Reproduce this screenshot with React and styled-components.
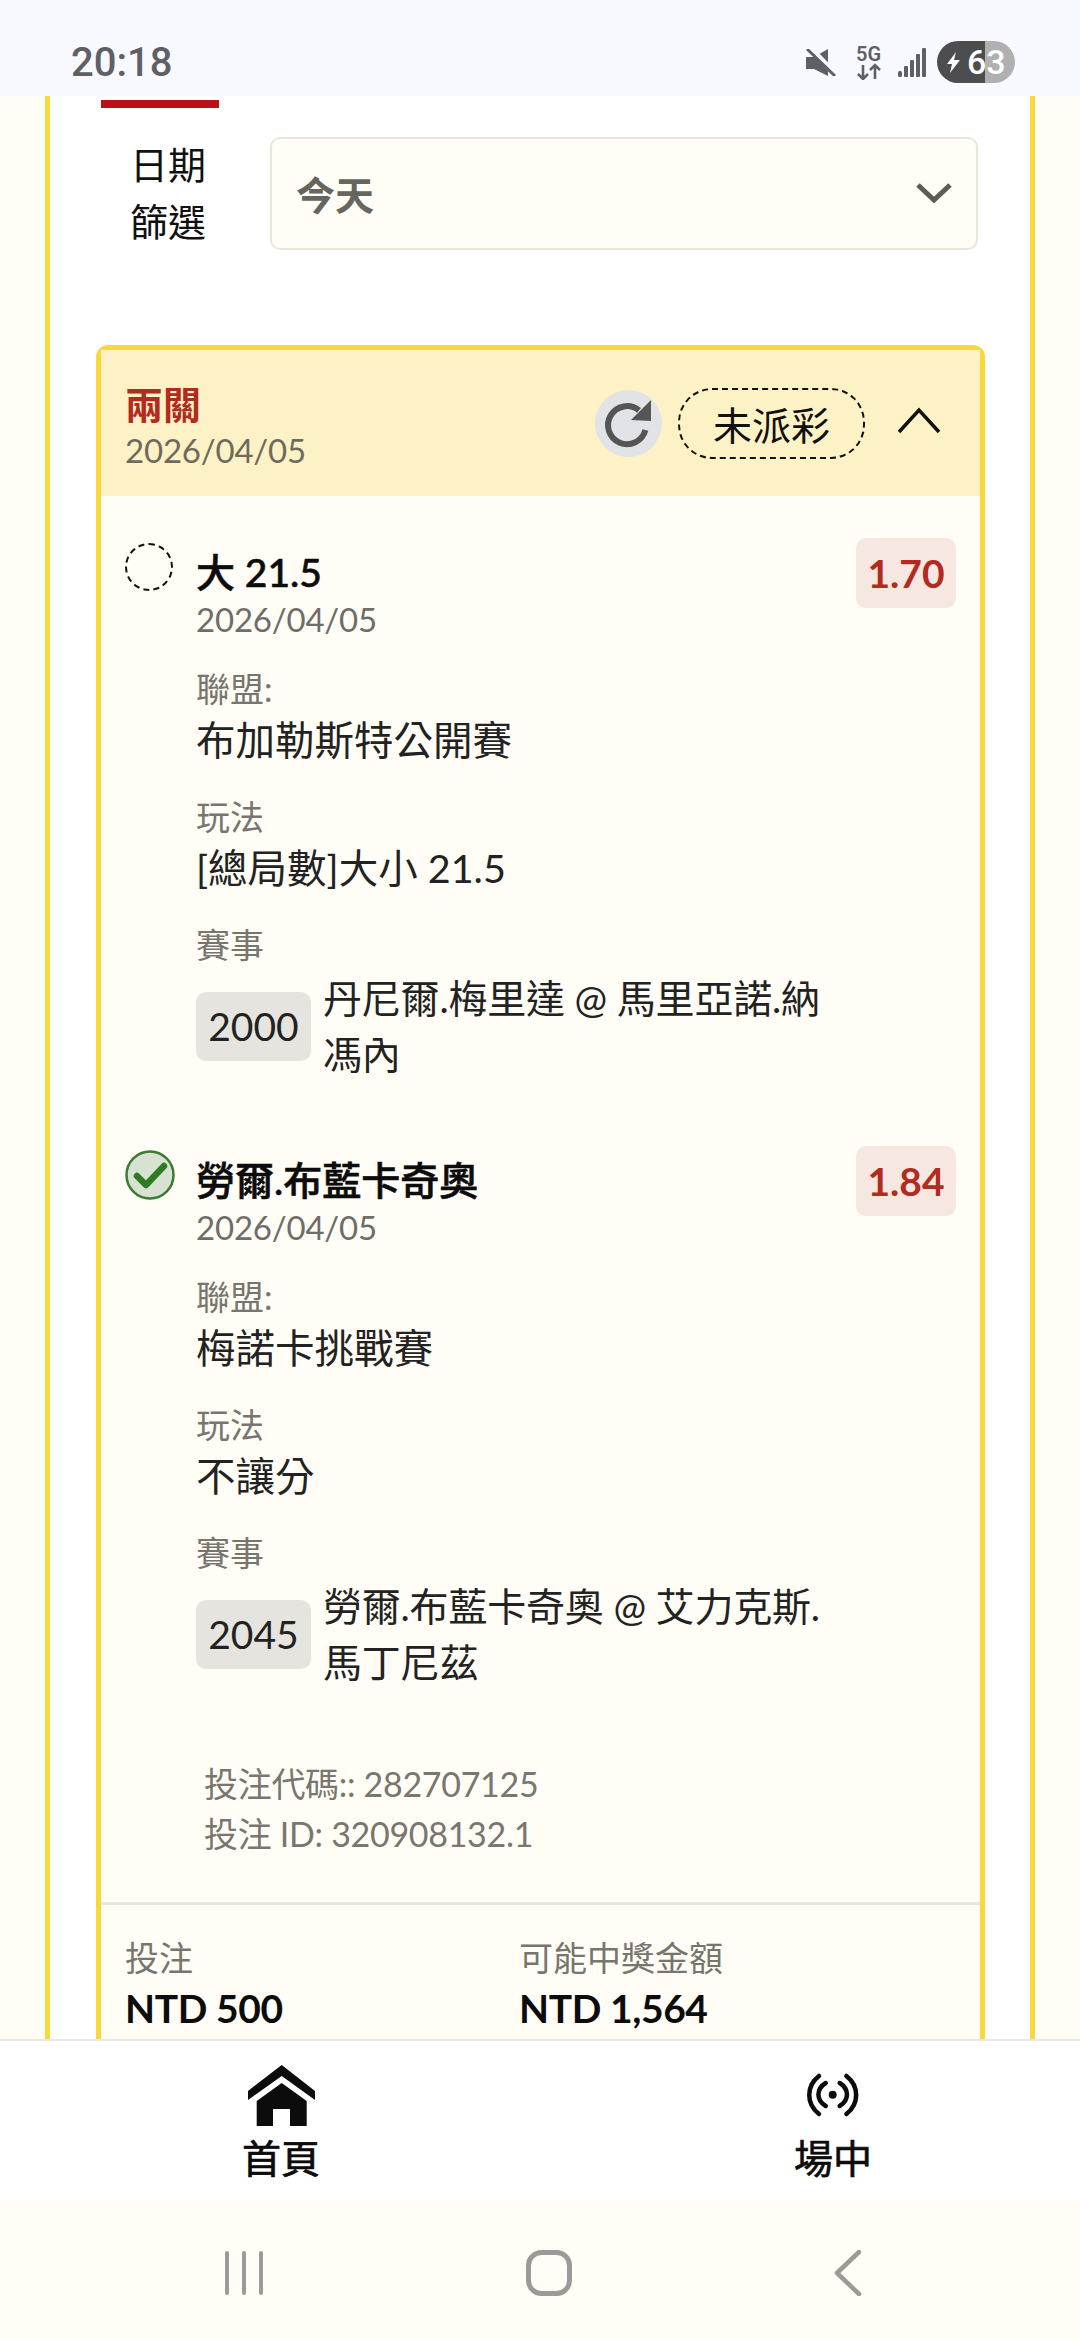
import React from 'react';
import styled, { createGlobalStyle } from 'styled-components';

const GlobalStyle = createGlobalStyle`
  html, body {
    margin: 0;
    padding: 0;
    background: #fffdf6;
    font-family: 'Lato', 'Noto Sans CJK TC', sans-serif;
  }
  * { box-sizing: border-box; }
`;

const Screen = styled.div`
  width: 1080px;
  height: 2340px;
  display: flex;
  flex-direction: column;
  overflow: hidden;
`;

const StatusBar = styled.div`
  height: 96px;
  flex: none;
  background: #f8f8ff;
  display: flex;
  align-items: center;
  justify-content: space-between;
  padding: 28px 65px 0 71px;
`;

const Clock = styled.div`
  font-family: 'Roboto', sans-serif;
  font-size: 40px;
  font-weight: 500;
  color: #5f6065;
`;

const StatusIcons = styled.div`
  display: flex;
  align-items: center;
  gap: 11px;
`;

const Battery = styled.div`
  width: 78px;
  height: 42px;
  border-radius: 21px;
  overflow: hidden;
  background: linear-gradient(to right, #4d4d50 0 48px, #b0b0b3 48px);
  color: #fff;
  font-family: 'Roboto', sans-serif;
  font-size: 34px;
  font-weight: 500;
  display: flex;
  align-items: center;
  padding-left: 10px;
`;

const Main = styled.div`
  flex: 1;
  min-height: 0;
  overflow: hidden;
  padding: 0 45px;
`;

const Sheet = styled.div`
  background: #fff;
  border-left: 5px solid #fbd83a;
  border-right: 5px solid #fbd83a;
  height: 100%;
  padding: 4px 45px 0 46px;
`;

const TabMark = styled.div`
  width: 118px;
  height: 8px;
  margin-left: 5px;
  background: #b91116;
`;

const FilterRow = styled.div`
  display: flex;
  align-items: center;
  margin-top: 28px;
  padding-right: 7px;
`;

const FilterLabel = styled.div`
  width: 174px;
  flex: none;
  padding-right: 30px;
  font-size: 38px;
  line-height: 57px;
  color: #111;
  text-align: center;
`;

const Select = styled.div`
  flex: 1;
  height: 113px;
  background: #fffdf6;
  border: 2px solid #e8e5dd;
  border-radius: 10px;
  display: flex;
  align-items: center;
  justify-content: space-between;
  padding: 0 24px;
  font-size: 39px;
  font-weight: 700;
  color: #66655f;
`;

const Card = styled.div`
  margin-top: 95px;
  background: #fffdf6;
  border: 5px solid #fbd83a;
  border-bottom: none;
  border-radius: 12px 12px 0 0;
`;

const CardHeader = styled.div`
  height: 146px;
  background: #fdf2c6;
  display: flex;
  align-items: center;
  padding: 0 39px 0 24px;
`;

const HeaderText = styled.div`
  flex: 1;
  padding-top: 6px;
`;

const BetTitle = styled.div`
  font-size: 38px;
  line-height: 48px;
  font-weight: 700;
  color: #b32a1e;
`;

const DateText = styled.div`
  font-size: 33px;
  line-height: 44px;
  letter-spacing: -0.2px;
  color: ${(p) => p.$tone || '#6f6a5c'};
`;

const RefreshButton = styled.div`
  width: 67px;
  height: 67px;
  border-radius: 50%;
  background: #e2e3e7;
  margin-right: 16px;
`;

const StatusPill = styled.div`
  width: 187px;
  height: 71px;
  border: 2px dashed #111;
  border-radius: 34px;
  display: flex;
  align-items: center;
  justify-content: center;
  font-size: 39px;
  color: #111;
  margin-right: 32px;
`;

const Legs = styled.div`
  padding: 42px 24px 0 24px;
`;

const Leg = styled.div`
  display: grid;
  grid-template-columns: 48px 1fr 100px;
  column-gap: 23px;
  margin-bottom: 64px;
`;

const RadioEmpty = styled.div`
  width: 48px;
  height: 48px;
  margin-top: 5px;
  border-radius: 50%;
  border: 2px dashed #111;
`;

const LegBody = styled.div`
  min-width: 0;
`;

const LegName = styled.div`
  font-size: 39px;
  line-height: 50px;
  font-weight: 500;
  -webkit-text-stroke: 0.6px #0c0c0c;
  color: #0c0c0c;
  margin-top: 9px;
`;

const FieldLabel = styled.div`
  font-size: 34px;
  line-height: 48px;
  color: #77756e;
  margin-top: ${(p) => (p.$first ? 24 : 26)}px;
`;

const FieldValue = styled.div`
  font-size: 39.5px;
  line-height: 54px;
  color: #222;
`;

const MatchRow = styled.div`
  display: flex;
  align-items: center;
  gap: 12px;
  margin-top: 1px;
`;

const MatchCode = styled.div`
  flex: none;
  width: 115px;
  height: 69px;
  border-radius: 10px;
  background: #e6e4de;
  display: flex;
  align-items: center;
  justify-content: center;
  font-size: 39px;
  color: #222;
`;

const MatchName = styled.div`
  font-size: 39px;
  line-height: 56px;
  letter-spacing: -0.2px;
  color: #222;
  width: 505px;
`;

const Odds = styled.div`
  width: 100px;
  height: 70px;
  border-radius: 10px;
  background: #f7e7e1;
  display: flex;
  align-items: center;
  justify-content: center;
  font-size: 39px;
  font-weight: 700;
  color: #b32a1e;
`;

const Codes = styled.div`
  padding: 5px 0 0 103px;
  font-size: 34px;
  line-height: 50px;
  letter-spacing: -0.3px;
  color: #78766f;
`;

const Totals = styled.div`
  display: grid;
  grid-template-columns: 394px 1fr;
  border-top: 3px solid #e7e5df;
  margin-top: 43px;
  padding: 28px 24px 60px;
`;

const TotalLabel = styled.div`
  font-size: 34px;
  line-height: 50px;
  color: #77756e;
`;

const TotalValue = styled.div`
  font-size: 39px;
  line-height: 50px;
  font-weight: 700;
  letter-spacing: -0.4px;
  color: #0c0c0c;
`;

const BottomNav = styled.div`
  height: 161px;
  flex: none;
  background: #fff;
  border-top: 2px solid #e8e8e8;
  display: grid;
  grid-template-columns: 562px 1fr;
`;

const NavItem = styled.div`
  display: flex;
  flex-direction: column;
  align-items: center;
  padding: 16px 0 0 ${(p) => p.$inset || 0}px;
  font-size: 39px;
  font-weight: 400;
  -webkit-text-stroke: 0.7px #0c0c0c;
  line-height: 50px;
  color: #0c0c0c;
`;

const NavIconBox = styled.div`
  height: 76px;
  display: flex;
  align-items: center;
`;

const SystemNav = styled.div`
  height: 140px;
  flex: none;
  background: #fffdf6;
  display: flex;
  align-items: center;
  padding: 6px 218px 0 224px;
  justify-content: space-between;
`;

const RefreshIcon = () => (
  <svg width="67" height="67" viewBox="0 0 67 67" fill="none">
    <path d="M44 20.4A19 19 0 1 0 50.4 40" stroke="#555" strokeWidth="6" />
    <path d="M56 10v21L36 30z" fill="#555" />
  </svg>
);

const CheckIcon = () => (
  <svg width="50" height="50" viewBox="0 0 50 50" style={{ marginTop: 4 }}>
    <circle cx="25" cy="25" r="23.5" fill="#d7e2d2" stroke="#3d7a32" strokeWidth="2.5" />
    <path d="M12 26l9 9 18-19" fill="none" stroke="#2f7a22" strokeWidth="6.5" strokeLinecap="round" strokeLinejoin="round" />
  </svg>
);

const SelectChevron = () => (
  <svg width="36" height="20" viewBox="0 0 36 20" fill="none">
    <path d="M2 2l16 15L34 2" stroke="#5c5b56" strokeWidth="5" />
  </svg>
);

const CollapseChevron = () => (
  <svg width="44" height="28" viewBox="0 0 44 28" fill="none" style={{ marginTop: -6 }}>
    <path d="M2 26L22 4l20 22" stroke="#111" strokeWidth="3.5" />
  </svg>
);

const HomeIcon = () => (
  <svg width="67" height="61" viewBox="0 0 67 61" fill="#0c0c0c">
    <path d="M33.7 0L67 26v9L33.7 11 0 35v-9z" />
    <path d="M33.7 18l25 18v25H42V44H25v17H8.7V36z" />
  </svg>
);

const LiveIcon = () => (
  <svg width="56" height="46" viewBox="0 0 56 46" fill="none" stroke="#0c0c0c" strokeWidth="4.5" strokeLinecap="round">
    <path d="M14 4C1 14 1 32 14 42" />
    <path d="M20.7 11C11 17 11 28 20.7 34" />
    <path d="M41.4 4C54.4 14 54.4 32 41.4 42" />
    <path d="M34.7 11C44.4 17 44.4 28 34.7 34" />
    <circle cx="27.7" cy="22.7" r="4" fill="#0c0c0c" stroke="none" />
  </svg>
);

const MuteIcon = () => (
  <svg width="39" height="27" viewBox="0 0 39 27">
    <path d="M0 8h8L22 0v27L8 20H0z" fill="#5f6065" />
    <path d="M3 -2L29 25" stroke="#f8f8ff" strokeWidth="6" />
    <path d="M1 0l28 27" stroke="#5f6065" strokeWidth="3" />
  </svg>
);

const NetworkIcon = () => (
  <svg width="31" height="38" viewBox="0 0 31 38" fill="none" stroke="#5f6065" strokeWidth="2.6" style={{ marginTop: -3 }}>
    <path d="M7 23v14M2 32l5 5 5-5M19 37V23M14 28l5-5 5 5" />
    <text x="0" y="19" fontFamily="Roboto, sans-serif" fontSize="20" fontWeight="600" fill="#5f6065" stroke="none">5G</text>
  </svg>
);

const SignalIcon = () => (
  <svg width="28" height="29" viewBox="0 0 28 29" fill="#5f6065">
    <rect x="0" y="23" width="4" height="6" rx="1.5" />
    <rect x="6" y="18" width="4" height="11" rx="1" />
    <rect x="12" y="12" width="4" height="17" rx="1" />
    <rect x="18" y="6" width="4" height="23" rx="1" />
    <rect x="24" y="0" width="4" height="29" rx="1" />
  </svg>
);

const BoltIcon = () => (
  <svg width="13" height="21" viewBox="0 0 13 21" style={{ marginRight: 7, flex: 'none' }}>
    <path d="M9 0L0 12h5L3 21l10-13H7z" fill="#fff" />
  </svg>
);

const RecentsIcon = () => (
  <svg width="40" height="44" viewBox="0 0 40 44" stroke="#9a9a98" strokeWidth="4" strokeLinecap="round">
    <path d="M3 2v40M20 2v40M37 2v40" />
  </svg>
);

const HomeKeyIcon = () => (
  <svg width="46" height="46" viewBox="0 0 46 46" fill="none">
    <rect x="2.5" y="2.5" width="41" height="41" rx="13" stroke="#9a9a98" strokeWidth="5" />
  </svg>
);

const BackKeyIcon = () => (
  <svg width="28" height="46" viewBox="0 0 28 46" fill="none">
    <path d="M25 2L3 23l22 21" stroke="#9a9a98" strokeWidth="4.5" strokeLinecap="round" strokeLinejoin="round" />
  </svg>
);

const legs = [
  {
    name: '大 21.5',
    odds: '1.70',
    league: '布加勒斯特公開賽',
    market: '[總局數]大小 21.5',
    code: '2000',
    match: '丹尼爾.梅里達 @ 馬里亞諾.納馮內',
    won: false,
  },
  {
    name: '勞爾.布藍卡奇奧',
    odds: '1.84',
    league: '梅諾卡挑戰賽',
    market: '不讓分',
    code: '2045',
    match: '勞爾.布藍卡奇奧 @ 艾力克斯.馬丁尼茲',
    won: true,
  },
];

const App = () => (
  <Screen>
    <GlobalStyle />
    <StatusBar>
      <Clock>20:18</Clock>
      <StatusIcons>
        <MuteIcon />
        <NetworkIcon />
        <SignalIcon />
        <Battery>
          <BoltIcon />
          63
        </Battery>
      </StatusIcons>
    </StatusBar>
    <Main>
      <Sheet>
        <TabMark />
        <FilterRow>
          <FilterLabel>日期<br />篩選</FilterLabel>
          <Select>
            今天
            <SelectChevron />
          </Select>
        </FilterRow>
        <Card>
          <CardHeader>
            <HeaderText>
              <BetTitle>兩關</BetTitle>
              <DateText>2026/04/05</DateText>
            </HeaderText>
            <RefreshButton>
              <RefreshIcon />
            </RefreshButton>
            <StatusPill>未派彩</StatusPill>
            <CollapseChevron />
          </CardHeader>
          <Legs>
            {legs.map((leg) => (
              <Leg key={leg.code}>
                {leg.won ? <CheckIcon /> : <RadioEmpty />}
                <LegBody>
                  <LegName>{leg.name}</LegName>
                  <DateText $tone="#6f6d67">2026/04/05</DateText>
                  <FieldLabel $first>聯盟:</FieldLabel>
                  <FieldValue>{leg.league}</FieldValue>
                  <FieldLabel>玩法</FieldLabel>
                  <FieldValue>{leg.market}</FieldValue>
                  <FieldLabel>賽事</FieldLabel>
                  <MatchRow>
                    <MatchCode>{leg.code}</MatchCode>
                    <MatchName>{leg.match}</MatchName>
                  </MatchRow>
                </LegBody>
                <Odds>{leg.odds}</Odds>
              </Leg>
            ))}
          </Legs>
          <Codes>
            <div>投注代碼:: 282707125</div>
            <div>投注 ID: 320908132.1</div>
          </Codes>
          <Totals>
            <div>
              <TotalLabel>投注</TotalLabel>
              <TotalValue>NTD 500</TotalValue>
            </div>
            <div>
              <TotalLabel>可能中獎金額</TotalLabel>
              <TotalValue>NTD 1,564</TotalValue>
            </div>
          </Totals>
        </Card>
      </Sheet>
    </Main>
    <BottomNav>
      <NavItem>
        <NavIconBox><HomeIcon /></NavIconBox>
        首頁
      </NavItem>
      <NavItem $inset={24}>
        <NavIconBox><LiveIcon /></NavIconBox>
        場中
      </NavItem>
    </BottomNav>
    <SystemNav>
      <RecentsIcon />
      <HomeKeyIcon />
      <BackKeyIcon />
    </SystemNav>
  </Screen>
);

export default App;
